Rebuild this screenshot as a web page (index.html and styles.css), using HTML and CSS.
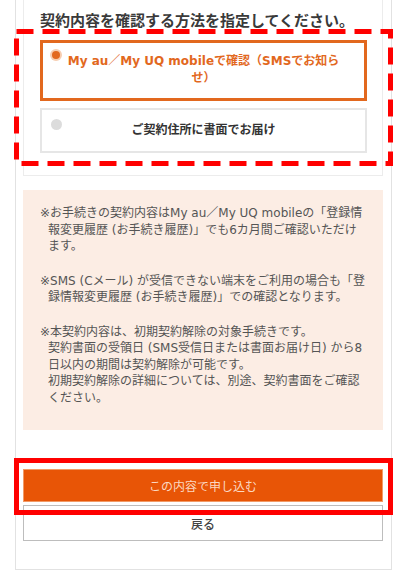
FILE: index.html
```html
<!DOCTYPE html>
<html lang="ja">
<head>
<meta charset="utf-8">
<title>契約内容の確認方法</title>
<link rel="stylesheet" href="styles.css">
</head>
<body>
<div class="card">
  <section class="choice-panel">
    <h2 class="title">契約内容を確認する方法を指定してください。</h2>
    <div class="options">
      <div class="option option--selected">
        <span class="radio radio--on"></span>
        <span class="option-text">My au／My UQ mobileで確認（SMSでお知ら<br>せ）</span>
      </div>
      <div class="option">
        <span class="radio"></span>
        <span class="option-text">ご契約住所に書面でお届け</span>
      </div>
    </div>
  </section>

  <div class="notice">
    <p class="note">※お手続きの契約内容はMy au／My UQ mobileの「登録情報変更履歴 (お手続き履歴)」でも6カ月間ご確認いただけます。</p>
    <p class="note">※SMS (Cメール) が受信できない端末をご利用の場合も「登録情報変更履歴 (お手続き履歴)」での確認となります。</p>
    <p class="note">※本契約内容は、初期契約解除の対象手続きです。<br>契約書面の受領日 (SMS受信日または書面お届け日) から8日以内の期間は契約解除が可能です。<br>初期契約解除の詳細については、別途、契約書面をご確認ください。</p>
  </div>

  <div class="actions">
    <button class="btn btn-primary" type="button">この内容で申し込む</button>
    <button class="btn btn-back" type="button">戻る</button>
  </div>

  <svg class="mark mark--dashed" width="379" height="137" viewBox="0 0 379 137" aria-hidden="true">
    <rect x="2.5" y="2.5" width="374" height="132" fill="none" stroke="#ff0000" stroke-width="5" stroke-dasharray="17 9"/>
  </svg>
  <div class="mark mark--solid" aria-hidden="true"></div>
</div>
</body>
</html>
```

FILE: styles.css
```css
* {
  box-sizing: border-box;
}

html, body {
  margin: 0;
  padding: 0;
  background: #ffffff;
}

body {
  font-family: "DejaVu Sans", "Noto Sans CJK JP", sans-serif;
  color: #555555;
}

.card {
  position: relative;
  width: 377px;
  margin-left: 15px;
  padding: 0 8px 28px 7px;
  border: 1px solid #e2e2e2;
  border-top: none;
  background: #ffffff;
}

.choice-panel {
  padding: 10px 15px 22px 16px;
  border: 1px solid #ececec;
  border-top: none;
}

.title {
  margin: 0 0 10px 0;
  font-family: "Noto Sans CJK JP", sans-serif;
  font-size: 15px;
  line-height: 20px;
  font-weight: bold;
  color: #3a3a3a;
  white-space: nowrap;
}

.options {
  display: flex;
  flex-direction: column;
  gap: 7px;
}

.option {
  position: relative;
  display: flex;
  justify-content: center;
  text-align: center;
  border: 2px solid #e6e6e6;
  padding: 12px 20px;
  font-size: 12px;
  line-height: 17px;
  font-weight: bold;
  color: #333333;
}

.option--selected {
  border: 3px solid #e2681e;
  padding: 10px 20px 11px;
  color: #e2681e;
}

.option-text {
  display: block;
}

.radio {
  position: absolute;
  left: 9px;
  top: 9px;
  width: 11px;
  height: 11px;
  border-radius: 50%;
  background: #dcdcdc;
}

.radio--on {
  left: 9px;
  top: 8px;
  width: 8px;
  height: 8px;
  background: #e2681e;
  box-shadow: 0 0 0 2px #f7cdb0;
}

.notice {
  margin-top: 14px;
  padding: 15px 16px 24px 17px;
  background: #fcede4;
}

.note {
  margin: 0 0 18px 0;
  padding-left: 8px;
  text-indent: -8px;
  font-size: 12px;
  line-height: 16.5px;
  color: #555555;
}

.note:last-child {
  margin-bottom: 0;
}

.actions {
  display: flex;
  flex-direction: column;
  gap: 3px;
  margin-top: 39px;
}

.btn {
  display: block;
  width: 100%;
  margin: 0;
  font-family: "Noto Sans CJK JP", sans-serif;
  font-size: 12px;
  cursor: pointer;
}

.btn-primary {
  height: 33px;
  border: 1px solid #f29a66;
  background: #e85506;
  color: #fbd8c2;
}

.btn-back {
  height: 36px;
  border: 1px solid #bdbdbd;
  background: #ffffff;
  color: #444444;
  font-weight: 500;
}

.mark {
  position: absolute;
  pointer-events: none;
}

.mark--dashed {
  left: -2px;
  top: 29px;
}

.mark--solid {
  left: -2px;
  top: 458px;
  width: 379px;
  height: 57px;
  border: 5px solid #ff0000;
}
```
